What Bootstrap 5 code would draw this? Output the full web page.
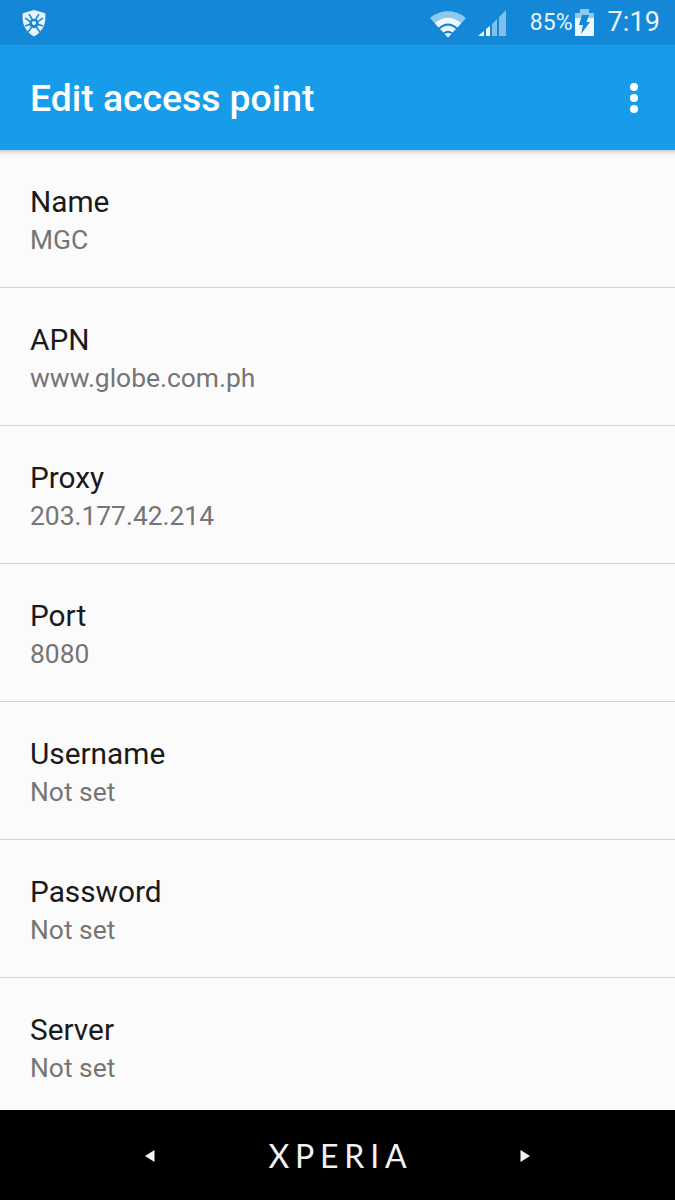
<!doctype html>
<html lang="en">
<head>
<meta charset="utf-8">
<title>Edit access point</title>
<link href="https://cdn.jsdelivr.net/npm/bootstrap@5.3.0/dist/css/bootstrap.min.css" rel="stylesheet">
<style>
html,body{height:1200px;overflow:hidden;background:#fafafa;font-family:Roboto,"Liberation Sans",sans-serif}
.phone{width:675px;height:1200px}
.statusbar{height:45px;flex:none;background:#1488d6;color:#e9f4fc;padding:0 15px 0 20px}
.status-left{flex:1}
.wifi-icon{margin-top:2px;margin-right:-2px}
.signal-icon{margin-left:14px}
.pct{font-size:23px;margin-left:23px;line-height:1}
.batt-icon{margin-left:2px}
.clock{font-size:27px;margin-left:14px;line-height:1;letter-spacing:.1px}
.appbar{height:105px;flex:none;background:#169ce9;padding:0 37px 0 30px;z-index:2}
.apptitle{font-size:37.3px;font-weight:500;color:#fff;margin:0;line-height:1;padding-top:3px}
.dots{width:9px;gap:3px;padding-top:1px}
.dots i{display:block;width:8px;height:8px;border-radius:50%;background:#fff}
.listing{flex:1;min-height:0;overflow:hidden;background:#fbfbfb;position:relative}
.listing::before{content:"";position:absolute;left:0;right:0;top:0;height:9px;background:linear-gradient(#c9cacb,#efefef 35%,#fbfbfb)}
.entry{height:138px;flex:none;padding:33px 30px 0;border-bottom:1px solid #d2d2d2;background:transparent;border-radius:0!important;border-left:0;border-right:0;border-top:0}
.entry-name{font-size:29.8px;line-height:38px;color:#1a1a1a}
.entry-value{font-size:26.4px;line-height:38px;color:#757575}
.navbottom{height:90px;background:#000;flex:none}
.xperia{font-family:Lato,"Liberation Sans",sans-serif;font-weight:400;font-size:32px;letter-spacing:5.8px;margin-right:-5.8px;color:#f2f2f2;line-height:1;padding-top:1px}
.navinner{width:386px;padding-top:1px}
</style>
</head>
<body>
<div class="phone d-flex flex-column">
  <div class="statusbar d-flex align-items-center">
    <div class="status-left d-flex align-items-center">
      <svg width="28" height="28" viewBox="0 0 28 30" aria-label="Dr.Web">
        <path d="M14 1 L26 4.500 C27 14 25 23 14 29.500 C3 23 1 14 2 4.500 Z" fill="#e9f4fc"/>
        <g fill="none" stroke="#1488d6" stroke-width="1.700" stroke-linecap="round">
          <path d="M9 6l3 5M19 6l-3 5M5 10l5 3.500M23 10l-5 3.500M5 18l4.500-1.500M23 18l-4.500-1.500M8 24l3-4M20 24l-3-4"/>
        </g>
        <circle cx="14" cy="15.500" r="5" fill="#1488d6"/>
        <circle cx="14" cy="15" r="2.200" fill="#e9f4fc"/>
      </svg>
    </div>
    <svg class="wifi-icon" width="36" height="28" viewBox="0 0 36 28" aria-label="Wi-Fi">
      <path d="M0 8 C10 -1 26 -1 36 8 L31.500 13 C23 5.500 13 5.500 4.500 13 Z" fill="#8cc9ef"/>
      <path d="M4.500 13 C13 5.500 23 5.500 31.500 13 L27.500 17.500 C21 12 15 12 8.500 17.500 Z" fill="#f2f9fe"/>
      <path d="M10 19 C15 14.500 21 14.500 26 19 L22.500 22.500 C19.500 20 16.500 20 13.500 22.500 Z" fill="#f2f9fe"/>
      <path d="M14.500 24 C16.500 22.500 19.500 22.500 21.500 24 L18 27.500 Z" fill="#f2f9fe"/>
    </svg>
    <svg class="signal-icon" width="29" height="28" viewBox="0 0 29 28" aria-label="Signal">
      <path d="M0 27 L6 22 V27 Z M8 20 L12 17 V27 H8 Z" fill="#f2f9fe"/>
      <path d="M14 15 L19 10 V27 H14 Z M21 8 L28 1 V27 H21 Z" fill="#7fc0ea"/>
    </svg>
    <span class="pct">85%</span>
    <svg class="batt-icon" width="19" height="29" viewBox="0 0 19 29" aria-label="Battery charging">
      <path d="M5 1h9v4h-9z M0 5 h19 v7 H0z" fill="#8cc9ef"/>
      <path d="M0 10h19v18H0z" fill="#eef7fd"/>
      <path d="M7 7 H14 L11.500 14 H15 L6 26 L8 17 H4 Z" fill="#1488d6"/>
    </svg>
    <span class="clock">7:19</span>
  </div>
  <header class="appbar d-flex align-items-center justify-content-between">
    <h1 class="apptitle">Edit access point</h1>
    <div class="dots d-flex flex-column align-items-center"><i></i><i></i><i></i></div>
  </header>
  <div class="listing list-group list-group-flush">
    <div class="list-group-item entry"><div class="entry-name">Name</div><div class="entry-value">MGC</div></div>
    <div class="list-group-item entry"><div class="entry-name">APN</div><div class="entry-value">www.globe.com.ph</div></div>
    <div class="list-group-item entry"><div class="entry-name">Proxy</div><div class="entry-value">203.177.42.214</div></div>
    <div class="list-group-item entry"><div class="entry-name">Port</div><div class="entry-value">8080</div></div>
    <div class="list-group-item entry"><div class="entry-name">Username</div><div class="entry-value">Not set</div></div>
    <div class="list-group-item entry"><div class="entry-name">Password</div><div class="entry-value">Not set</div></div>
    <div class="list-group-item entry"><div class="entry-name">Server</div><div class="entry-value">Not set</div></div>
  </div>
  <footer class="navbottom d-flex align-items-center justify-content-center">
    <div class="navinner d-flex align-items-center justify-content-between">
      <svg width="10" height="12" viewBox="0 0 10 12" aria-label="Back"><path d="M9.500 0V12L0 6Z" fill="#f2f2f2"/></svg>
      <span class="xperia">XPERIA</span>
      <svg width="10" height="12" viewBox="0 0 10 12" aria-label="Forward"><path d="M.5 0V12L10 6Z" fill="#f2f2f2"/></svg>
    </div>
  </footer>
</div>
<script src="https://cdn.jsdelivr.net/npm/bootstrap@5.3.0/dist/js/bootstrap.bundle.min.js"></script>
</body>
</html>
